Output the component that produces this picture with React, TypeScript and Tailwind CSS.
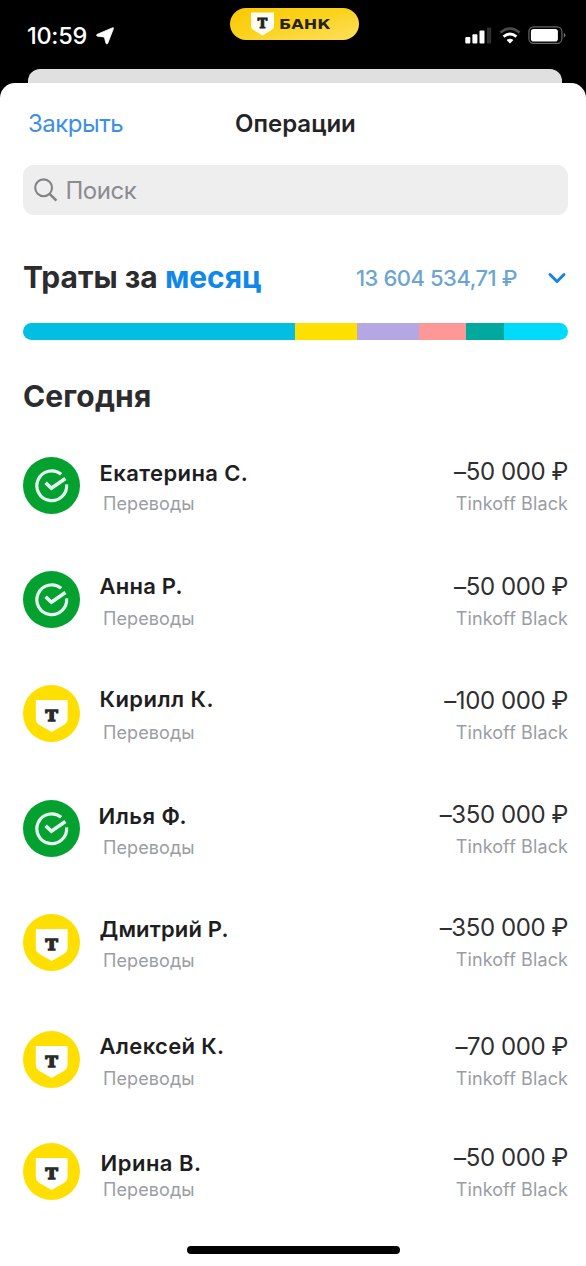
import React from 'react';
import { ChevronDown } from 'lucide-react';

type Bank = 'sber' | 'tbank';

interface Operation {
  name: string;
  amount: string;
  bank: Bank;
  rowClass: string;
  nameClass: string;
  subClass: string;
  amountClass: string;
}

const operations: Operation[] = [
  { name: 'Екатерина С.', amount: '–50 000 ₽', bank: 'sber', rowClass: 'h-[114px]', nameClass: 'mt-1 tracking-[0.4px]', subClass: 'mt-[7px]', amountClass: 'mt-[3px]' },
  { name: 'Анна Р.', amount: '–50 000 ₽', bank: 'sber', rowClass: 'h-[114px]', nameClass: 'mt-[3px] tracking-[0.25px]', subClass: 'mt-[9px]', amountClass: 'mt-1' },
  { name: 'Кирилл К.', amount: '–100 000 ₽', bank: 'tbank', rowClass: 'h-[115px]', nameClass: 'mt-0.5 tracking-[0.45px]', subClass: 'mt-[10px]', amountClass: 'mt-1' },
  { name: 'Илья Ф.', amount: '–350 000 ₽', bank: 'sber', rowClass: 'h-[114px]', nameClass: 'mt-1 -ml-[1px] tracking-[0.5px]', subClass: 'mt-2', amountClass: 'mt-[3px]' },
  { name: 'Дмитрий Р.', amount: '–350 000 ₽', bank: 'tbank', rowClass: 'h-[117px]', nameClass: 'mt-[3px] tracking-[0.15px]', subClass: 'mt-2', amountClass: 'mt-0.5' },
  { name: 'Алексей К.', amount: '–70 000 ₽', bank: 'tbank', rowClass: 'h-[112px]', nameClass: 'mt-[3px] tracking-[0.35px]', subClass: 'mt-[9px]', amountClass: 'mt-1' },
  { name: 'Ирина В.', amount: '–50 000 ₽', bank: 'tbank', rowClass: 'h-[57px]', nameClass: 'mt-2 ml-[1px] tracking-[0.5px]', subClass: 'mt-[3px]', amountClass: 'mt-[3px]' },
];

const segments = [
  { id: 'transfers', className: 'w-[272px] bg-[#02bfe2]' },
  { id: 'shops', className: 'w-[62px] bg-[#ffe000]' },
  { id: 'services', className: 'w-[62px] bg-[#b5a7e3]' },
  { id: 'food', className: 'w-[47px] bg-[#fe9798]' },
  { id: 'transport', className: 'w-[38px] bg-[#00a99d]' },
  { id: 'other', className: 'flex-1 bg-[#00dbfb]' },
];

const SberIcon = () => (
  <svg className="h-[57px] w-[57px] shrink-0" viewBox="0 0 57 57" fill="none">
    <circle cx="28.5" cy="28.5" r="28.5" fill="#04a131" />
    <path d="M38.2 17.2A14.9 14.9 0 1 0 43.6 27.4" stroke="#e6fff0" strokeWidth="3.2" />
    <path d="M22.6 25.8L28.4 31.2L42.4 21.6" stroke="#e6fff0" strokeWidth="3.6" />
  </svg>
);

const TBankIcon = () => (
  <svg className="h-[57px] w-[57px] shrink-0" viewBox="0 0 57 57">
    <circle cx="28.5" cy="28.5" r="28.5" fill="#ffdf00" />
    <path d="M12.8 15H44.6V32.5C44.6 36.5 43.6 38.3 40.4 40.2L28.7 47L17 40.2C13.8 38.3 12.8 36.5 12.8 32.5Z" fill="#fff" />
    <text x="0" y="0" transform="translate(28.7 35.6) scale(1.18 1)" textAnchor="middle" fontSize="14" fontWeight="700" fill="#2b2b2b" stroke="#2b2b2b" strokeWidth="1.3" className="font-['DejaVu_Serif',serif]">T</text>
  </svg>
);

const StatusBar = () => (
  <div className="flex h-[69px] items-start pr-[20px] pl-[27px]">
    <div className="flex w-[203px] items-center pt-[22px]">
      <span className="w-[61px] text-[23.5px] leading-[28px] font-medium tracking-[-0.3px] text-white">10:59</span>
      <svg className="ml-[8px] h-[18px] w-[18px]" viewBox="0 0 18 18" fill="#fff" stroke="#fff" strokeWidth="0.8" strokeLinejoin="round">
        <path d="M16.6 0.8C17.4 0.4 17.8 0.9 17.4 1.7L11.8 16.2C11.4 17.3 10.2 17.3 9.9 16.1L8.6 11C8.4 10.3 8.1 10 7.4 9.9L1.6 9.2C0.4 9 0.2 7.8 1.3 7.3Z" />
      </svg>
    </div>
    <div className="mt-[8px] flex h-8 w-[129px] items-center rounded-full bg-gradient-to-br from-[#fbc800] via-[#fbd31c] to-[#fde05a] pl-[21px]">
      <svg className="h-[24px] w-[23px]" viewBox="0 0 23 24">
        <path d="M0 0.5H23V13C23 16 22 17.3 19.8 18.6L11.5 23.5L3.2 18.6C1 17.3 0 16 0 13Z" fill="#fffdf4" />
        <text x="11.5" y="15.9" textAnchor="middle" fontSize="12.6" fontWeight="700" fill="#222" stroke="#222" strokeWidth="1.1" className="font-['DejaVu_Serif',serif]">T</text>
      </svg>
      <span className="ml-[5px] origin-left scale-x-[1.15] font-['DejaVu_Sans',sans-serif] text-[14px] leading-none font-bold text-[#26230f]">БАНК</span>
    </div>
    <div className="flex flex-1 items-start justify-end pt-[26px]">
      <svg className="h-[18px] w-[101px]" viewBox="0 0 101 18" fill="none">
        <rect x="0.3" y="11" width="5" height="6.6" rx="1" fill="#fff" />
        <rect x="7.4" y="8.2" width="5" height="9.4" rx="1" fill="#fff" />
        <rect x="14.5" y="4.6" width="5" height="13" rx="1" fill="#fff" />
        <rect x="21.8" y="1.4" width="4.4" height="16.2" rx="1" fill="#2f2f2f" />
        <path d="M35.4 6.5Q45 -1.5 54.6 6.5" stroke="#4c4c4c" strokeWidth="2.6" />
        <path d="M38.6 10.6Q45 5.3 51.4 10.6" stroke="#fff" strokeWidth="2.8" />
        <path d="M42 14.1Q45 12 48 14.1L45 17.2Z" fill="#fff" stroke="#fff" strokeWidth="0.8" />
        <rect x="63.9" y="0.9" width="33" height="16.4" rx="4.6" stroke="#666" strokeWidth="1.2" />
        <rect x="65.9" y="2.9" width="27" height="12.6" rx="2.8" fill="#fff" />
        <path d="M98.8 7Q100.4 7.5 100.4 9.2Q100.4 10.8 98.8 11.4Z" fill="#777" />
      </svg>
    </div>
  </div>
);

const OperationRow: React.FC<{ op: Operation }> = ({ op }) => (
  <div className={`flex items-start ${op.rowClass}`}>
    {op.bank === 'sber' ? <SberIcon /> : <TBankIcon />}
    <div className="ml-[19.5px] flex flex-1 flex-col whitespace-nowrap">
      <span className={`text-[22px] leading-6 font-semibold text-[#1e1e20] ${op.nameClass}`}>{op.name}</span>
      <span className={`pl-[3.5px] text-[18px] leading-6 tracking-[0.1px] text-[#9a9da3] ${op.subClass}`}>Переводы</span>
    </div>
    <div className="flex flex-col items-end whitespace-nowrap">
      <span className={`text-[24px] leading-6 tracking-[-0.4px] text-[#2f2f31] ${op.amountClass}`}>{op.amount}</span>
      <span className="mt-2 text-[18px] leading-6 tracking-[0.1px] text-[#9a9da3]">Tinkoff Black</span>
    </div>
  </div>
);

export default function App() {
  return (
    <div className="flex h-[1266px] w-[586px] flex-col overflow-hidden bg-black font-['Inter',sans-serif]">
      <StatusBar />

      {/* Edge of the screen lying under the sheet */}
      <div className="mr-[24px] ml-[28px] h-[14px] shrink-0 rounded-t-[12px] bg-[#e0e0e0]" />

      <div className="flex flex-1 flex-col rounded-t-[15px] bg-white pr-[18px] pl-[23px]">
        <div className="flex h-[82px] items-start pt-[25px] text-[24px] leading-8">
          <span className="w-[212px] pl-[5px] tracking-[-0.5px] text-[#3a8fe8]">Закрыть</span>
          <span className="font-semibold text-[#242426]">Операции</span>
        </div>

        <div className="flex h-[50px] items-center rounded-[11px] bg-[#eeeeef] pl-[11px]">
          <svg className="h-[24px] w-[24px]" viewBox="0 0 24 24" fill="none" stroke="#838387" strokeWidth="2.1">
            <circle cx="9.6" cy="9.8" r="8.4" />
            <path d="M15.6 15.8L22.4 22.6" strokeWidth="2.6" />
          </svg>
          <span className="mt-[1px] ml-[7.5px] text-[24px] leading-8 tracking-[-0.5px] text-[#8b8b8f]">Поиск</span>
        </div>

        <div className="mt-[42px] flex h-10 items-center">
          <h1 className="flex-1 text-[30px] leading-10 font-bold text-[#2c2c2e]">
            Траты за <span className="text-[#1088ea]">месяц</span>
          </h1>
          <span className="mt-[2px] text-[22px] font-medium tracking-[-0.45px] text-[#6ba5d0]">13 604 534,71 ₽</span>
          <ChevronDown className="mt-[1px] -mr-[3px] ml-[26px] h-[28px] w-[28px]" color="#1683ee" strokeWidth={2.6} />
        </div>

        <div className="mt-[26px] flex h-[17px] overflow-hidden rounded-full">
          {segments.map(s => (
            <div key={s.id} className={s.className} />
          ))}
        </div>

        <h2 className="mt-[36px] text-[30px] leading-10 font-bold tracking-[0.15px] text-[#2c2c2e]">Сегодня</h2>

        <div className="mt-[41px] flex flex-col">
          {operations.map(op => (
            <OperationRow key={op.name} op={op} />
          ))}
        </div>

        <div className="mt-[46px] ml-[164px] h-[8px] w-[213px] rounded-full bg-black" />
      </div>
    </div>
  );
}
